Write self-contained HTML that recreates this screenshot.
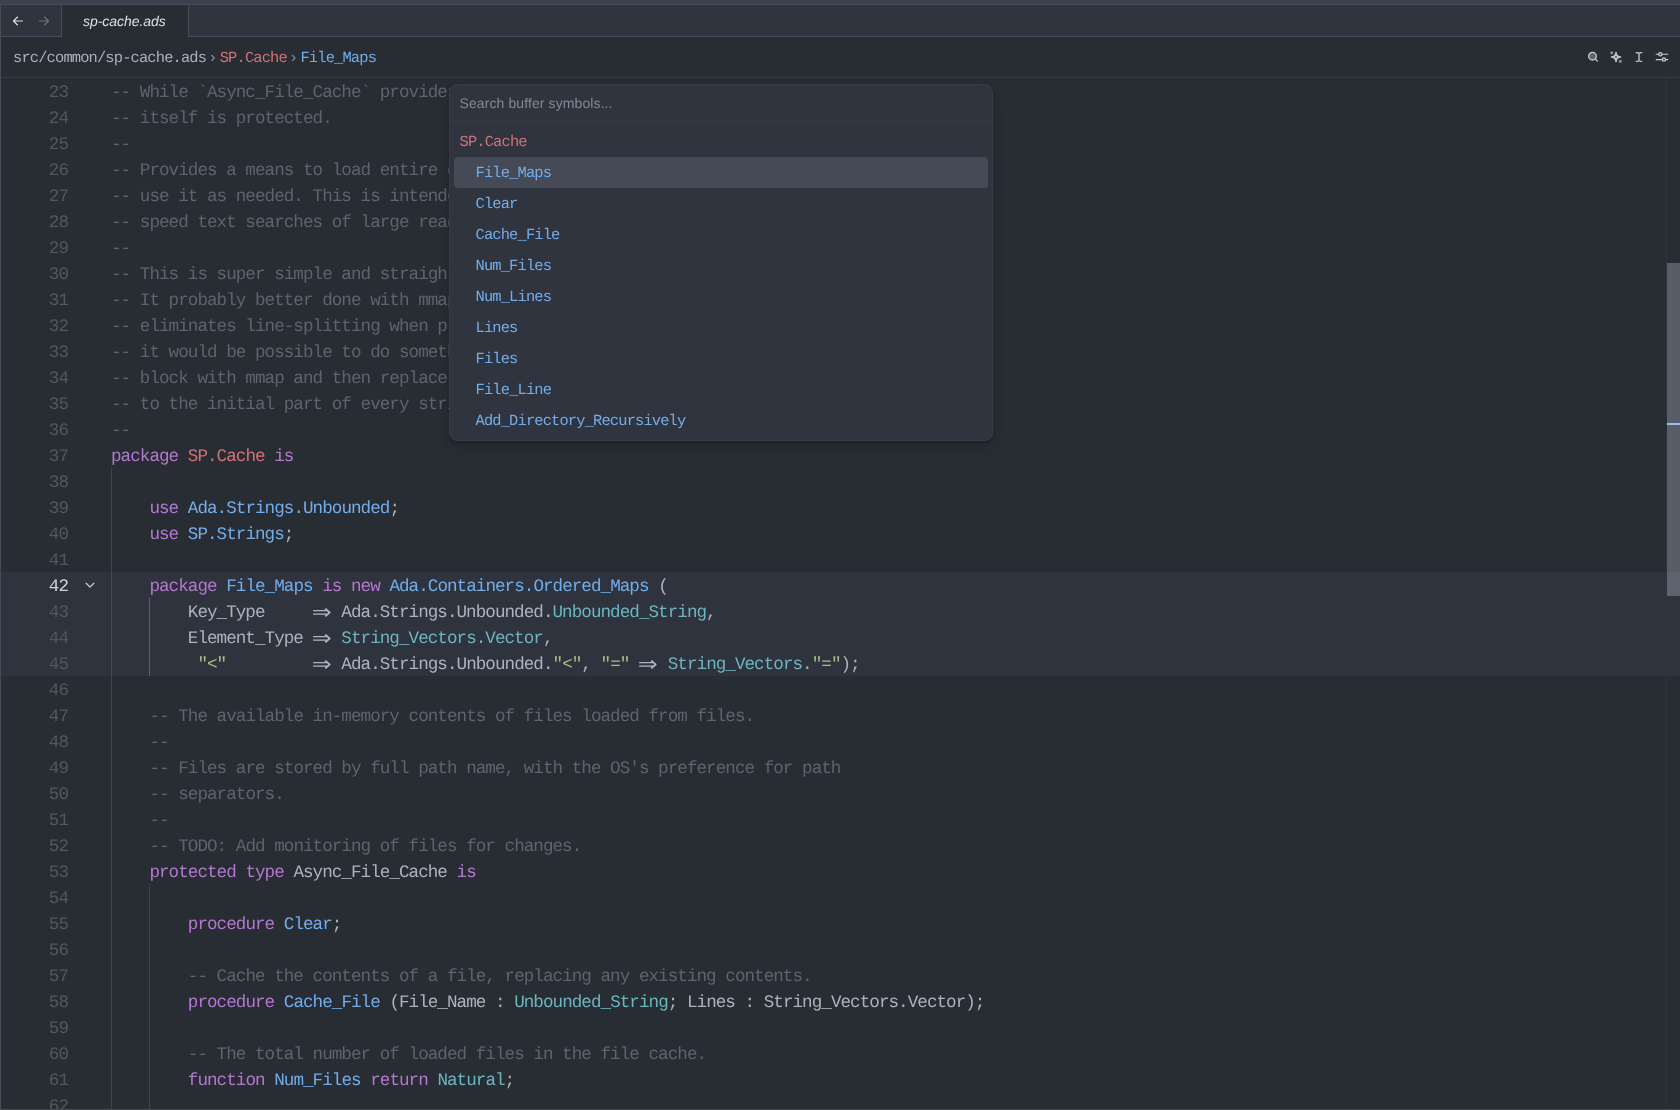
<!DOCTYPE html>
<html lang="en">
<head>
<meta charset="utf-8">
<title>sp-cache.ads</title>
<style>
*{box-sizing:border-box;margin:0;padding:0}
html,body{width:1680px;height:1110px;overflow:hidden;background:#3b414d}
body{position:relative;-webkit-font-smoothing:antialiased;text-rendering:geometricPrecision;font-family:"Liberation Sans",sans-serif;font-size:14px;color:#c8ccd4}
.mono{font-family:"Liberation Mono","DejaVu Sans Mono",monospace}
#win{will-change:transform;position:absolute;left:0;top:4px;width:1680px;height:1106px;background:#282c33;overflow:hidden;border:1px solid #464b57;border-right:0}
/* tab bar */
#tabbar{position:absolute;left:0;top:0;width:1679px;height:32px;background:#2f343e;border-bottom:1px solid #464b57}
#nav{position:absolute;left:0;top:0;width:61px;height:32px;border-right:1px solid #464b57;border-bottom:1px solid #464b57}
#tab{position:absolute;left:61px;top:0;width:127px;height:32px;background:#282c33;border-right:1px solid #464b57;font-style:italic;color:#dce0e5;line-height:33px;padding-left:21px;letter-spacing:-0.05px}
/* toolbar */
#crumbs{position:absolute;left:0;top:32px;width:1679px;height:41px;background:#282c33;border-bottom:1px solid #363c46}
#crumbs .path{position:absolute;left:12px;top:0;line-height:42px;font-size:15.4px;letter-spacing:-0.84px;color:#a9afbc;white-space:pre}
#crumbs .sep{font-family:"Liberation Sans",sans-serif;color:#8f94a0;display:inline-block;width:13.6px;text-align:center;letter-spacing:0}
.r{color:#d07277}.b{color:#73ade9}.k{color:#b477cf}.t{color:#6eb4bf}.s{color:#a1c181}.c{color:#5d636f}
/* editor */
#editor{position:absolute;left:0;top:73px;width:1679px;height:1031px;background:#282c33;overflow:hidden}
#hl{position:absolute;left:0;top:494px;width:1679px;height:104px;background:#2e333d}
.row{position:absolute;left:0;height:26px;width:1679px;line-height:26px;font-size:17.6px;letter-spacing:-0.96px;white-space:pre;color:#acb2be;padding-top:2px}
.ln{position:absolute;left:0;width:67px;text-align:right;color:#4e5a5f}
.ln.cur{color:#d0d4da}
.code{position:absolute;left:110px}
.ar{display:inline-block;width:19.2px;height:20px;line-height:20px;text-align:center;letter-spacing:0;font-family:"DejaVu Sans",sans-serif;font-size:21px;transform:scaleX(1.13);vertical-align:top;position:relative;top:2px;left:-0.7px;overflow:visible}
.guide{position:absolute;width:1px;background:rgba(200,204,212,.15)}
.guide.act{background:rgba(200,204,212,.30)}
/* scrollbar */
#sbar{position:absolute;left:1665px;top:73px;width:14px;height:1031px;border-left:1px solid #2e333c}
#thumb{position:absolute;left:1666px;top:258px;width:13px;height:333px;background:rgba(205,210,225,.3)}
#mark{position:absolute;left:1666px;top:418px;width:13px;height:2px;background:#93bff0}
/* picker */
#picker{position:absolute;left:448px;top:79px;width:544px;height:357px;background:#2f343e;border:1px solid #363c46;border-radius:8px;box-shadow:0 2px 3px rgba(0,0,0,.14),0 4px 8px rgba(0,0,0,.10),0 8px 14px rgba(0,0,0,.05);overflow:hidden}
#search{height:37px;border-bottom:1px solid #363c46;line-height:37px;padding-left:9.5px;letter-spacing:0.1px;color:#838994;font-size:14px}
#list{padding:4px 4px}
#list .hd{height:31px;line-height:31px;padding-top:1px;padding-left:5.5px;font-size:15.4px;letter-spacing:-0.84px;color:#d07277}
#list .it{height:31px;line-height:31px;padding-top:1px;padding-left:21.5px;font-size:15.4px;letter-spacing:-0.84px;color:#73ade9;border-radius:4px}
#list .it.sel{background:#454a56}
svg{position:absolute;overflow:visible}
</style>
</head>
<body>
<div id="win">
  <div id="tabbar"></div>
  <div id="nav">
    <svg style="left:11px;top:9.5px" width="12" height="12" viewBox="0 0 12 12" fill="none" stroke="#dce0e5" stroke-width="1.15" stroke-linecap="round" stroke-linejoin="round"><path d="M10.5 6H1.5M5.5 2L1.5 6l4 4"/></svg>
    <svg style="left:37px;top:9.5px" width="12" height="12" viewBox="0 0 12 12" fill="none" stroke="#6f7480" stroke-width="1.15" stroke-linecap="round" stroke-linejoin="round"><path d="M1.5 6h9M6.5 2l4 4-4 4"/></svg>
  </div>
  <div id="tab">sp-cache.ads</div>
  <div id="crumbs">
    <div class="path mono">src/common/sp-cache.ads<span class="sep">›</span><span class="r">SP.Cache</span><span class="sep">›</span><span class="b">File_Maps</span></div>
    <!-- toolbar icons -->
    <svg style="left:1585px;top:13px" width="14" height="14" viewBox="0 0 14 14" fill="none" stroke="#c8ccd4" stroke-width="1.3" stroke-linecap="round"><circle cx="6.5" cy="6.2" r="3.8" fill="rgba(200,204,212,.35)"/><path d="M9.4 9.1L11.3 11"/></svg>
    <svg style="left:1608px;top:13px" width="14" height="14" viewBox="0 0 14 14" fill="#c8ccd4"><path stroke="#c8ccd4" stroke-width=".9" stroke-linejoin="round" d="M7 1.9C7.5 5 9 6.5 12.1 7 9 7.5 7.5 9 7 12.1 6.5 9 5 7.5 1.9 7 5 6.5 6.5 5 7 1.9Z"/><circle cx="7" cy="7" r="1.2" fill="#6a6f7a"/><circle cx="2.7" cy="2.7" r="1.5" opacity=".62"/><circle cx="11.3" cy="11.2" r="1.5" opacity=".62"/></svg>
    <svg style="left:1631px;top:13px" width="14" height="14" viewBox="0 0 14 14" fill="none" stroke="#c8ccd4" stroke-width="1.3" stroke-linecap="round"><path d="M7 3.2v7.6M4.2 2.7c1.4 0 2.3.2 2.8.7.5-.5 1.4-.7 2.8-.7M4.2 11.3c1.4 0 2.3-.2 2.8-.7.5.5 1.4.7 2.8.7"/></svg>
    <svg style="left:1654px;top:13px" width="14" height="14" viewBox="0 0 14 14" fill="none" stroke="#c8ccd4" stroke-width="1.1" stroke-linecap="round"><path d="M1.2 4.3h2.3M7.1 4.3h5.7M1.2 9.6h5.8M10.7 9.6h2.1"/><circle cx="5.3" cy="4.3" r="1.7" fill="rgba(200,204,212,.25)"/><circle cx="8.9" cy="9.6" r="1.7" fill="rgba(200,204,212,.25)"/></svg>
  </div>
  <div id="editor" class="mono">
    <div id="hl"></div>
    <div class="guide" style="left:110px;top:390px;height:641px"></div>
    <div class="guide act" style="left:148px;top:520px;height:78px"></div>
    <div class="guide" style="left:148px;top:806px;height:225px"></div>
    <svg style="left:83px;top:501px" width="12" height="12" viewBox="0 0 12 12" fill="none" stroke="#c8ccd4" stroke-width="1.3" stroke-linecap="round" stroke-linejoin="round"><path d="M2.2 4.3l3.8 3.8 3.8-3.8"/></svg>
<div class="row" style="top:0px"><span class="ln">23</span><span class="code"><span class="c">-- While `Async_File_Cache` provides parallel access to the cache, it</span></span></div>
<div class="row" style="top:26px"><span class="ln">24</span><span class="code"><span class="c">-- itself is protected.</span></span></div>
<div class="row" style="top:52px"><span class="ln">25</span><span class="code"><span class="c">--</span></span></div>
<div class="row" style="top:78px"><span class="ln">26</span><span class="code"><span class="c">-- Provides a means to load entire directory structures into memory and</span></span></div>
<div class="row" style="top:104px"><span class="ln">27</span><span class="code"><span class="c">-- use it as needed. This is intended for text files only, in particular to</span></span></div>
<div class="row" style="top:130px"><span class="ln">28</span><span class="code"><span class="c">-- speed text searches of large read-only code bases.</span></span></div>
<div class="row" style="top:156px"><span class="ln">29</span><span class="code"><span class="c">--</span></span></div>
<div class="row" style="top:182px"><span class="ln">30</span><span class="code"><span class="c">-- This is super simple and straightforward, but works well enough.</span></span></div>
<div class="row" style="top:208px"><span class="ln">31</span><span class="code"><span class="c">-- It probably better done with mmap to load files directly to memory. It</span></span></div>
<div class="row" style="top:234px"><span class="ln">32</span><span class="code"><span class="c">-- eliminates line-splitting when printing output. If this were in C++,</span></span></div>
<div class="row" style="top:260px"><span class="ln">33</span><span class="code"><span class="c">-- it would be possible to do something like store the file as a huge byte</span></span></div>
<div class="row" style="top:286px"><span class="ln">34</span><span class="code"><span class="c">-- block with mmap and then replace newlines with '\0' and store byte counts</span></span></div>
<div class="row" style="top:312px"><span class="ln">35</span><span class="code"><span class="c">-- to the initial part of every string.</span></span></div>
<div class="row" style="top:338px"><span class="ln">36</span><span class="code"><span class="c">--</span></span></div>
<div class="row" style="top:364px"><span class="ln">37</span><span class="code"><span class="k">package</span> <span class="r">SP.Cache</span> <span class="k">is</span></span></div>
<div class="row" style="top:390px"><span class="ln">38</span><span class="code"></span></div>
<div class="row" style="top:416px"><span class="ln">39</span><span class="code">    <span class="k">use</span> <span class="b">Ada.Strings.Unbounded</span>;</span></div>
<div class="row" style="top:442px"><span class="ln">40</span><span class="code">    <span class="k">use</span> <span class="b">SP.Strings</span>;</span></div>
<div class="row" style="top:468px"><span class="ln">41</span><span class="code"></span></div>
<div class="row" style="top:494px"><span class="ln cur">42</span><span class="code">    <span class="k">package</span> <span class="b">File_Maps</span> <span class="k">is new</span> <span class="b">Ada.Containers.Ordered_Maps</span> (</span></div>
<div class="row" style="top:520px"><span class="ln">43</span><span class="code">        Key_Type     <span class="ar">⇒</span> Ada.Strings.Unbounded.<span class="t">Unbounded_String</span>,</span></div>
<div class="row" style="top:546px"><span class="ln">44</span><span class="code">        Element_Type <span class="ar">⇒</span> <span class="t">String_Vectors.Vector</span>,</span></div>
<div class="row" style="top:572px"><span class="ln">45</span><span class="code">         <span class="s">"&lt;"</span>         <span class="ar">⇒</span> Ada.Strings.Unbounded.<span class="s">"&lt;"</span>, <span class="s">"="</span> <span class="ar">⇒</span> <span class="t">String_Vectors</span>.<span class="s">"="</span>);</span></div>
<div class="row" style="top:598px"><span class="ln">46</span><span class="code"></span></div>
<div class="row" style="top:624px"><span class="ln">47</span><span class="code">    <span class="c">-- The available in-memory contents of files loaded from files.</span></span></div>
<div class="row" style="top:650px"><span class="ln">48</span><span class="code">    <span class="c">--</span></span></div>
<div class="row" style="top:676px"><span class="ln">49</span><span class="code">    <span class="c">-- Files are stored by full path name, with the OS's preference for path</span></span></div>
<div class="row" style="top:702px"><span class="ln">50</span><span class="code">    <span class="c">-- separators.</span></span></div>
<div class="row" style="top:728px"><span class="ln">51</span><span class="code">    <span class="c">--</span></span></div>
<div class="row" style="top:754px"><span class="ln">52</span><span class="code">    <span class="c">-- TODO: Add monitoring of files for changes.</span></span></div>
<div class="row" style="top:780px"><span class="ln">53</span><span class="code">    <span class="k">protected type</span> Async_File_Cache <span class="k">is</span></span></div>
<div class="row" style="top:806px"><span class="ln">54</span><span class="code"></span></div>
<div class="row" style="top:832px"><span class="ln">55</span><span class="code">        <span class="k">procedure</span> <span class="b">Clear</span>;</span></div>
<div class="row" style="top:858px"><span class="ln">56</span><span class="code"></span></div>
<div class="row" style="top:884px"><span class="ln">57</span><span class="code">        <span class="c">-- Cache the contents of a file, replacing any existing contents.</span></span></div>
<div class="row" style="top:910px"><span class="ln">58</span><span class="code">        <span class="k">procedure</span> <span class="b">Cache_File</span> (File_Name : <span class="t">Unbounded_String</span>; Lines : String_Vectors.Vector);</span></div>
<div class="row" style="top:936px"><span class="ln">59</span><span class="code"></span></div>
<div class="row" style="top:962px"><span class="ln">60</span><span class="code">        <span class="c">-- The total number of loaded files in the file cache.</span></span></div>
<div class="row" style="top:988px"><span class="ln">61</span><span class="code">        <span class="k">function</span> <span class="b">Num_Files</span> <span class="k">return</span> <span class="t">Natural</span>;</span></div>
<div class="row" style="top:1014px"><span class="ln">62</span><span class="code"></span></div>
  </div>
  <div id="sbar"></div>
  <div id="thumb"></div>
  <div id="mark"></div>
  <div id="picker">
    <div id="search">Search buffer symbols...</div>
    <div id="list" class="mono">
      <div class="hd">SP.Cache</div>
<div class="it sel">File_Maps</div>
<div class="it">Clear</div>
<div class="it">Cache_File</div>
<div class="it">Num_Files</div>
<div class="it">Num_Lines</div>
<div class="it">Lines</div>
<div class="it">Files</div>
<div class="it">File_Line</div>
<div class="it">Add_Directory_Recursively</div>
    </div>
  </div>
</div>
</body>
</html>
